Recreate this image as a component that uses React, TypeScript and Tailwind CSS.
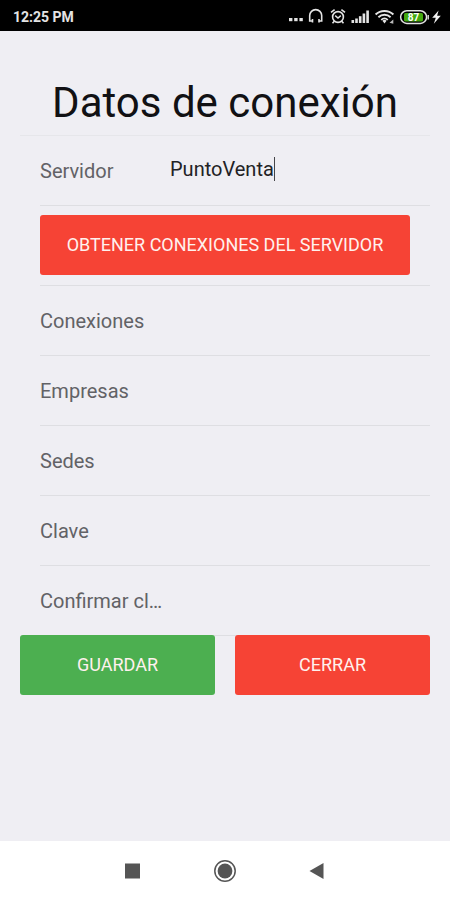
import type { ReactNode } from 'react';

function StatusIcons() {
  return (
    <div className="flex items-center">
      <svg width="154" height="20" viewBox="0 0 154 20" fill="none" stroke="#e4e4e4" aria-hidden="true">
        <g fill="#e4e4e4" stroke="none">
          <rect x="1" y="11" width="3.4" height="3.2" />
          <rect x="6.2" y="11" width="3.4" height="3.2" />
          <rect x="11.4" y="11" width="3.4" height="3.2" />
        </g>
        <path d="M24.5 14H21.7V8.6a6 6 0 0 1 12 0V14H31" strokeWidth="1.6" />
        <path d="M24.5 12v3.6M31 12v3.6" strokeWidth="1.6" />
        <circle cx="50" cy="10" r="5.4" strokeWidth="1.6" />
        <path d="M43 5.4l3.6-2.7M57 5.4l-3.6-2.7M46.3 14.2l-1.8 2M53.7 14.2l1.8 2" strokeWidth="1.6" />
        <path d="M47.2 8.6L50 11l2.8-2.4" strokeWidth="1.4" />
        <g fill="#e4e4e4" stroke="none">
          <rect x="63.5" y="13" width="2.6" height="3" />
          <rect x="67.2" y="11.5" width="2.6" height="4.5" />
          <rect x="70.9" y="9.2" width="2.6" height="6.8" />
          <rect x="74.6" y="6.5" width="2.6" height="9.5" />
          <rect x="78.3" y="3.5" width="2.6" height="12.5" />
        </g>
        <path d="M87.6 7.4a13 13 0 0 1 17.8 0" strokeWidth="2" />
        <path d="M90.4 10.2a9 9 0 0 1 12.2 0" strokeWidth="1.9" />
        <path d="M93.2 12.8a5 5 0 0 1 6.6 0" strokeWidth="1.7" />
        <path d="M94.4 13.8L96.5 16.4l2.1-2.6a3 3 0 0 0-4.2 0z" fill="#e4e4e4" stroke="none" />
        <path d="M101.5 15.8l3.8-3.4v4.4z" fill="#bbb" stroke="none" />
        <rect x="112.6" y="3.8" width="26" height="12.6" rx="6.3" strokeWidth="1.5" />
        <rect x="116" y="6" width="19" height="8.4" rx="1.5" fill="#43a80d" stroke="none" />
        <path d="M140.2 8v4.5" strokeWidth="1.4" />
        <text x="125.5" y="13.6" textAnchor="middle" fill="#fff" stroke="none" fontSize="10" fontWeight="700" fontFamily="Roboto, sans-serif">
          87
        </text>
        <path d="M150.6 3.6l-6.4 7.2h3.6l-2 5.9 7-7.9h-3.7z" fill="#f2f2f2" stroke="none" />
      </svg>
    </div>
  );
}

const labelClass = 'w-[130px] shrink-0 text-xl leading-6 text-[#626266]';
const rowClass = 'ml-5 flex h-[70px] items-center border-b border-[#dedee2]';
const fieldClass = 'h-12 min-w-0 flex-1 appearance-none bg-transparent text-xl text-[#222225] outline-none';
const buttonClass = 'h-[60px] rounded-[3px] text-lg text-[#fff1ee]';

function Row({ id, label, children }: { id: string; label: string; children: ReactNode }) {
  return (
    <div className={rowClass}>
      <label htmlFor={id} className={labelClass}>
        {label}
      </label>
      {children}
    </div>
  );
}

export default function App() {
  return (
    <div className="flex min-h-screen flex-col bg-[#efeef3] font-[Roboto,sans-serif]">
      <header className="flex h-[31px] items-center justify-between bg-black pt-0.5 pr-2 pl-[13px]">
        <span className="text-sm font-bold text-[#e4e4e4]">12:25 PM</span>
        <StatusIcons />
      </header>

      <main className="flex-1 px-5 pt-10">
        <h1 className="border-b border-[#e6e6ea] py-0.5 text-center text-[42px] leading-[60px] text-[#111114]">
          Datos de conexión
        </h1>
        <form onSubmit={(event) => event.preventDefault()}>
          <Row id="servidor" label="Servidor">
            <input
              id="servidor"
              defaultValue="PuntoVenta"
              className="h-12 appearance-none bg-transparent pb-1 text-xl text-[#222225] outline-none [field-sizing:content]"
            />
            <span className="mb-1 h-6 w-px bg-[#444448]" aria-hidden="true" />
          </Row>
          <div className="ml-5 border-b border-[#dedee2] pt-[9px] pr-5 pb-2.5">
            <button type="button" className={`${buttonClass} w-full bg-[#f64335]`}>
              OBTENER CONEXIONES DEL SERVIDOR
            </button>
          </div>
          <Row id="conexiones" label="Conexiones">
            <select id="conexiones" className={fieldClass} />
          </Row>
          <Row id="empresas" label="Empresas">
            <select id="empresas" className={fieldClass} />
          </Row>
          <Row id="sedes" label="Sedes">
            <select id="sedes" className={fieldClass} />
          </Row>
          <Row id="clave" label="Clave">
            <input id="clave" type="password" className={fieldClass} />
          </Row>
          <Row id="confirmar" label="Confirmar cl…">
            <input id="confirmar" type="password" className={fieldClass} />
          </Row>
          <div className="-mt-px grid grid-cols-2 gap-5">
            <button type="submit" className={`${buttonClass} bg-[#4caf50]`}>
              GUARDAR
            </button>
            <button type="button" className={`${buttonClass} bg-[#f64335]`}>
              CERRAR
            </button>
          </div>
        </form>
      </main>

      <nav className="flex h-[59px] items-center justify-center gap-[68px] bg-white">
        <button type="button" aria-label="Recientes" className="flex w-6 justify-center">
          <svg width="24" height="24" viewBox="0 0 24 24">
            <rect x="4" y="4.5" width="15" height="15" fill="#555" />
          </svg>
        </button>
        <button type="button" aria-label="Inicio" className="flex w-6 justify-center">
          <svg width="24" height="24" viewBox="0 0 24 24">
            <circle cx="12" cy="12" r="10.2" fill="none" stroke="#555" strokeWidth="1.5" />
            <circle cx="12" cy="12" r="7.4" fill="#555" />
          </svg>
        </button>
        <button type="button" aria-label="Atrás" className="flex w-6 justify-center">
          <svg width="24" height="24" viewBox="0 0 24 24">
            <path d="M4.5 12L18.5 4v16z" fill="#555" />
          </svg>
        </button>
      </nav>
    </div>
  );
}
